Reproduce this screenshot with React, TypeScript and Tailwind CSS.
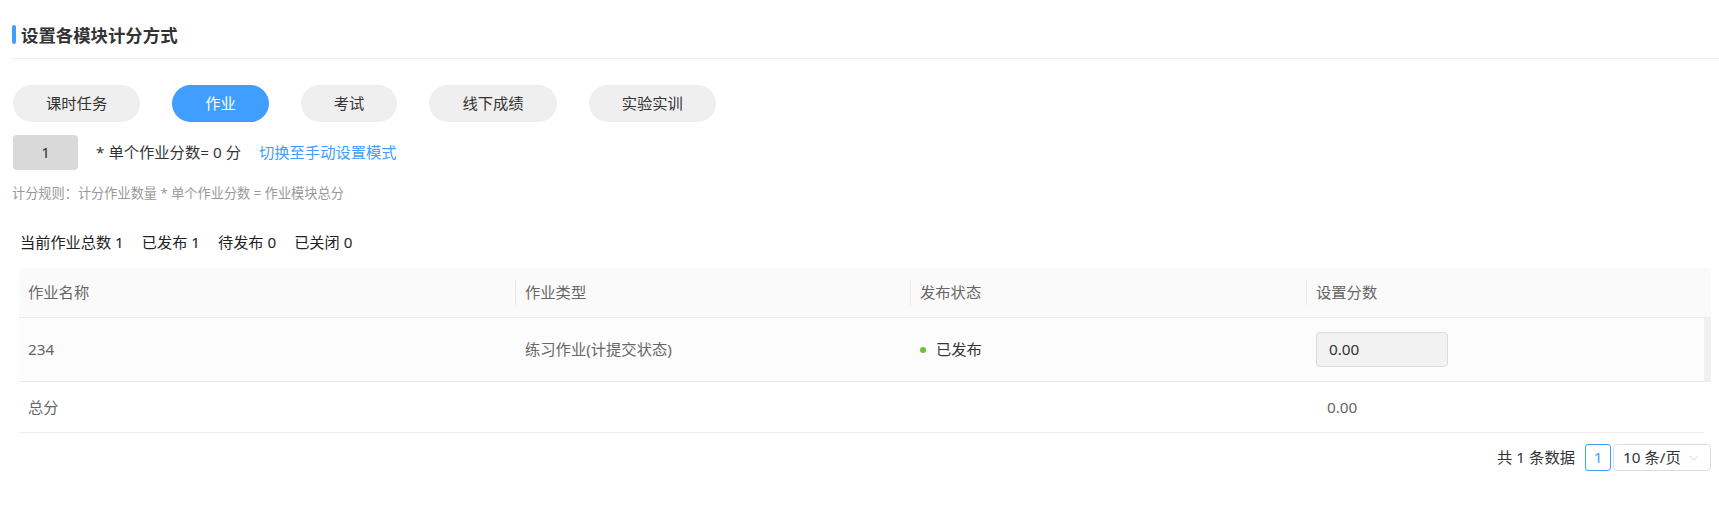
import { ChevronDown } from "lucide-react";

const TABS = ["课时任务", "作业", "考试", "线下成绩", "实验实训"];

const COLS = ["作业名称", "作业类型", "发布状态", "设置分数"];

export default function App() {
  const active = "作业";

  return (
    <div className="min-h-screen bg-white font-['Noto_Sans','Noto_Sans_CJK_SC',sans-serif] text-[#333]">
      <div className="ml-[11px]">
        <div className="flex h-[59px] items-start border-b border-[#eeeeee] pt-[25px]">
          <span className="ml-[1px] h-[19px] w-[4px] rounded-full bg-[#409eff]" />
          <span className="ml-[5px] text-[17.4px] font-bold leading-[20px] text-[#333]">
            设置各模块计分方式
          </span>
        </div>

        {/* module tabs */}
        <div className="ml-[2px] mt-[26px] flex gap-[32px]">
          {TABS.map((t) => (
            <button
              key={t}
              className={
                t === active
                  ? "h-[37px] rounded-full bg-[#409eff] px-[33px] text-[15.3px] text-white"
                  : "h-[37px] rounded-full bg-[#efefef] px-[33px] text-[15.3px] text-[#333]"
              }
            >
              {t}
            </button>
          ))}
        </div>

        <div className="ml-[2px] mt-[13px] flex items-center text-[15.3px]">
          <div className="flex h-[35px] w-[65px] items-center justify-center rounded-[4px] bg-[#d9d9d9]">
            1
          </div>
          <span className="ml-[18px]">* 单个作业分数= 0 分</span>
          <span className="ml-[18px] text-[#409eff]">切换至手动设置模式</span>
        </div>

        <div className="ml-[1px] mt-[14px] text-[13.2px] leading-[18px] text-[#999]">
          计分规则：计分作业数量 * 单个作业分数 = 作业模块总分
        </div>

        <div className="ml-[9px] mt-[30px] flex gap-[18px] text-[15.2px] leading-[20px] text-[#222]">
          <span>当前作业总数 1</span>
          <span>已发布 1</span>
          <span>待发布 0</span>
          <span>已关闭 0</span>
        </div>

        {/* table */}
        <div className="ml-[8px] mr-[8px] mt-[16px] text-[15.3px]">
          <div className="grid h-[50px] grid-cols-[496px_395px_396px_398px_1fr] items-center rounded-t-[4px] border-b border-[#ececec] bg-[#fafafa] text-[#666]">
            {COLS.map((c, i) => (
              <div key={c} className="flex h-[25px] items-center">
                {i > 0 && <span className="h-[25px] border-l border-[#e8e8e8]" />}
                <span className="pl-[9px]">{c}</span>
              </div>
            ))}
            <div />
          </div>

          <div className="grid h-[64px] grid-cols-[496px_395px_396px_398px_1fr] items-center border-b border-[#ececec] bg-[#fcfcfc] text-[#666]">
            <div className="pl-[9px]">234</div>
            <div className="pl-[10px]">练习作业(计提交状态)</div>
            <div className="flex items-center pl-[10px] text-[#333]">
              <span className="h-[6px] w-[6px] rounded-full bg-[#67c23a]" />
              <span className="ml-[10px]">已发布</span>
            </div>
            <div className="pl-[10px]">
              <div className="flex h-[35px] w-[132px] items-center rounded-[4px] border border-[#dcdcdc] bg-[#f2f2f2] pl-[12px] text-[#333]">
                0.00
              </div>
            </div>
            <div className="h-full bg-[#f0f0f0]" />
          </div>

          <div className="mr-[7px] grid h-[51px] grid-cols-[496px_395px_396px_398px] items-center border-b border-[#ececec] text-[#666]">
            <div className="pl-[9px]">总分</div>
            <div />
            <div />
            <div className="pl-[21px]">0.00</div>
          </div>

          {/* pagination */}
          <div className="mt-[11px] flex items-center justify-end text-[15.3px] text-[#333]">
            <span>共 1 条数据</span>
            <span className="ml-[10px] flex h-[27px] w-[26px] items-center justify-center rounded-[3px] border border-[#409eff] text-[#409eff]">
              1
            </span>
            <span className="ml-[2px] flex h-[27px] w-[98px] items-center justify-between rounded-[4px] border border-[#dcdcdc] pl-[9px] pr-[8px]">
              10 条/页
              <ChevronDown size={16} strokeWidth={1.1} color="#c8cbd2" />
            </span>
          </div>
        </div>
      </div>
    </div>
  );
}
